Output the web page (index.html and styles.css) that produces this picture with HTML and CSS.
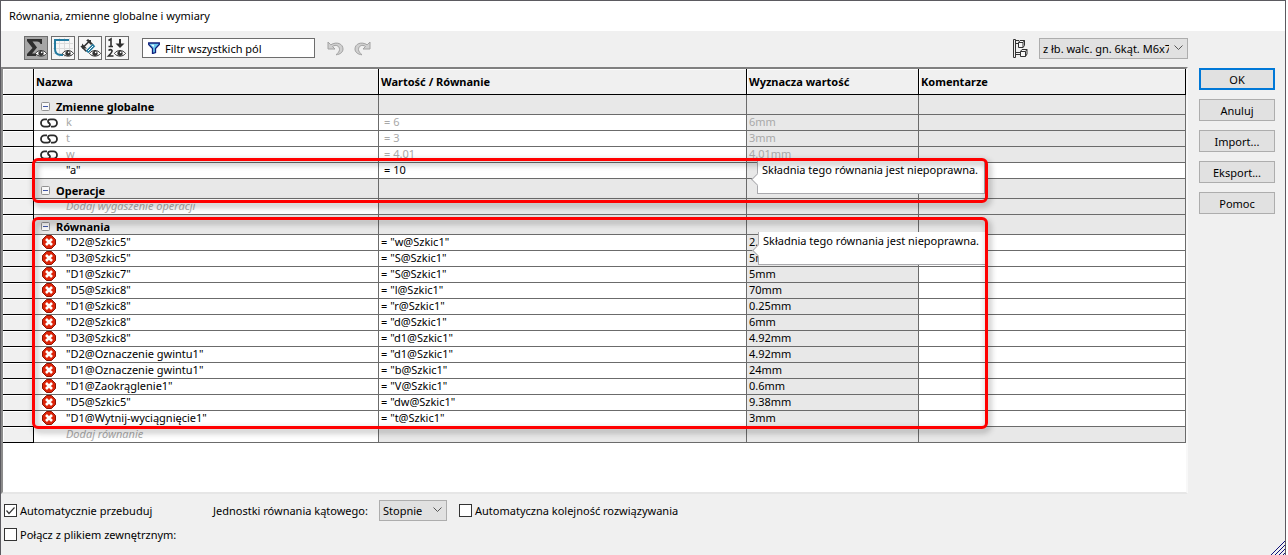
FILE: index.html
```
<!DOCTYPE html>
<html lang="pl">
<head>
    <meta charset="UTF-8">
    <meta name="viewport" content="width=device-width, initial-scale=1.0">
    <title>Równania, zmienne globalne i wymiary</title>
    <link rel="stylesheet" href="styles.css">
</head>
<body>
    <svg class="sprite" aria-hidden="true">
        <symbol id="eye" viewBox="0 0 12 8">
            <path d="M0.5 4.5C3 0.5 9 0.5 11.5 4.5C9 8 3 8 0.5 4.5Z" fill="#fff" stroke="#333" stroke-width="1"/>
            <circle cx="6" cy="4.3" r="2.6" fill="#333"/>
            <circle cx="6.7" cy="3.4" r="0.8" fill="#fff"/>
        </symbol>
        <symbol id="link" viewBox="0 0 18 10">
            <path d="M7 1.400H4.600A3.600 3.600 0 0 0 4.600 8.600H7.500Q10 8.600 10 6.500Q10 5.200 8.500 4.800" fill="none" stroke="#2b2b2b" stroke-width="1.800"/>
            <path d="M11 8.600H13.400A3.600 3.600 0 0 0 13.400 1.400H10.500Q8 1.400 8 3.500Q8 4.800 9.500 5.200" fill="none" stroke="#2b2b2b" stroke-width="1.800"/>
        </symbol>
        <symbol id="error" viewBox="0 0 14 14">
            <path d="M4.500 .5H9.500L13.500 4.500V9.500L9.500 13.500H4.500L.5 9.500V4.500Z" fill="#dc2408" stroke="#8c1608"/>
            <path d="M4 4L10 10M10 4L4 10" stroke="#fff" stroke-width="2.600"/>
        </symbol>
        <symbol id="minus" viewBox="0 0 9 9">
            <rect x=".5" y=".5" width="8" height="8" rx="1" fill="#f8f8f8" stroke="#919191"/>
            <path d="M2 4.500H7" stroke="#4157a5"/>
        </symbol>
    </svg>

    <main class="dialog">
        <h1 class="title">Równania, zmienne globalne i wymiary</h1>

        <div class="content">
            <div class="left">
                <div class="toolbar">
                    <div class="views">
                        <button type="button" class="tool active" aria-label="Widok równań">
                            <svg width="22" height="22" viewBox="0 0 22 22">
                                <path d="M2 2H17V7H15.500Q15 4.500 12 4.500H7.500L12 10.500L7 16.500H11V19H2V17L7.500 11L2 4Z" fill="#2e2e2e"/>
                                <use href="#eye" x="10" y="12" width="12" height="8"/>
                            </svg>
                        </button>
                        <button type="button" class="tool" aria-label="Widok szkicu">
                            <svg width="22" height="22" viewBox="0 0 22 22">
                                <path d="M7.500 1V20M12.500 1V20M17.500 1V20M1 6.500H21M1 11.500H21M1 16.500H21" stroke="#dcdcdc"/>
                                <path d="M17 3H3V12Q3 18 9 18H11" fill="none" stroke="#247a9f" stroke-width="2"/>
                                <use href="#eye" x="10" y="12" width="12" height="8"/>
                            </svg>
                        </button>
                        <button type="button" class="tool" aria-label="Widok wymiarów">
                            <svg width="22" height="22" viewBox="0 0 22 22">
                                <path d="M2 9L7.500 14.500M8.500 2.500L14 8M4.500 10L10.500 4" stroke="#333" stroke-width="1.600"/>
                                <path d="M3 11.500V6.500L8 11.500ZM7 3H12V8Z" fill="#333"/>
                                <path d="M8 15L15 8" stroke="#247a9f" stroke-width="3.500"/>
                                <path d="M9 14L14 9" stroke="#fff"/>
                                <use href="#eye" x="10" y="12" width="12" height="8"/>
                            </svg>
                        </button>
                        <button type="button" class="tool" aria-label="Widok uporządkowany">
                            <svg width="22" height="22" viewBox="0 0 22 22">
                                <path d="M2.500 3.500L5 2V9.500M2.500 9.500H7" fill="none" stroke="#2e2e2e" stroke-width="1.600"/>
                                <path d="M2.500 13.500Q4.500 11.700 6 13.500Q6.500 15 2.500 19H7.500" fill="none" stroke="#2e2e2e" stroke-width="1.600"/>
                                <path d="M14 2V8" stroke="#2e2e2e" stroke-width="2"/>
                                <path d="M9.500 6.500H18.500L14 11Z" fill="#2e2e2e"/>
                                <use href="#eye" x="8" y="12" width="12" height="8"/>
                            </svg>
                        </button>
                    </div>
                    <label class="filter">
                        <svg width="12" height="12" viewBox="0 0 12 12">
                            <path d="M.7 1H11.300V2.500L7.500 6.500V10.500L4.500 11.500V6.500L.7 2.500Z" fill="#6cc8ee" stroke="#10207c" stroke-width="1.300"/>
                            <path d="M3 2.700H6L5.700 5Z" fill="#fff"/>
                        </svg>
                        <input type="text" placeholder="Filtr wszystkich pól" aria-label="Filtr wszystkich pól">
                    </label>
                    <div class="history">
                        <button type="button" class="plain" aria-label="Cofnij">
                            <svg width="17" height="15" viewBox="0 0 17 15">
                                <path d="M1 1V8H8L5.500 5.500C9 3 12.500 5 12.500 8.500C12.500 10.500 11 12 9 13.800C13.500 13.300 16 11 16 8C16 3 10 0 3.800 3.800Z" fill="#d0d0d0" stroke="#a2a2a2"/>
                            </svg>
                        </button>
                        <button type="button" class="plain" aria-label="Ponów">
                            <svg width="17" height="15" viewBox="0 0 17 15">
                                <path d="M16 1V8H9L11.500 5.500C8 3 4.500 5 4.500 8.500C4.500 10.500 6 12 8 13.800C3.500 13.300 1 11 1 8C1 3 7 0 13.200 3.800Z" fill="#d0d0d0" stroke="#a2a2a2"/>
                            </svg>
                        </button>
                    </div>
                    <div class="config">
                        <svg width="15" height="19" viewBox="0 0 15 19">
                            <path d="M.5 .5H2.500V18.500H.5ZM2.500 4.500H5M2.500 13.500H7M2.500 1.500H6M2.500 15.500H7" fill="none" stroke="#333"/>
                            <path d="M5.500 3.500L7 1.500H11.500V6.500L10 8.500H5.500ZM5.500 3.500H10V8.500M10 3.500L11.500 1.500M7.500 12.500L9 10.500H14V15L12.500 17.500H7.500ZM7.500 12.500H12.500V17.500M12.500 12.500L14 10.500" fill="#f8f8f8" stroke="#333"/>
                        </svg>
                        <select class="config-select" aria-label="Konfiguracja">
                            <option>z łb. walc. gn. 6kąt. M6x70</option>
                        </select>
                    </div>
                </div>

                <div class="grid">
                    <table>
                        <colgroup>
                            <col class="col-mark">
                            <col class="col-name">
                            <col class="col-equation">
                            <col class="col-value">
                            <col>
                        </colgroup>
                        <thead>
                            <tr><th></th><th>Nazwa</th><th>Wartość / Równanie</th><th>Wyznacza wartość</th><th>Komentarze</th></tr>
                        </thead>
                        <tbody>
                            <tr class="section"><td></td><td><svg class="toggle"><use href="#minus"/></svg>Zmienne globalne</td><td></td><td></td><td></td></tr>
                            <tr class="linked"><td></td><td><span class="icon"><svg width="18" height="10"><use href="#link"/></svg></span>k</td><td>= 6</td><td>6mm</td><td></td></tr>
                            <tr class="linked"><td></td><td><span class="icon"><svg width="18" height="10"><use href="#link"/></svg></span>t</td><td>= 3</td><td>3mm</td><td></td></tr>
                            <tr class="linked"><td></td><td><span class="icon"><svg width="18" height="10"><use href="#link"/></svg></span>w</td><td>= 4.01</td><td>4.01mm</td><td></td></tr>
                            <tr class="global"><td></td><td><span class="icon"></span>"a"</td><td>= 10</td><td></td><td></td></tr>
                            <tr class="section"><td></td><td><svg class="toggle"><use href="#minus"/></svg>Operacje</td><td></td><td></td><td></td></tr>
                            <tr class="add"><td></td><td><span class="icon"></span>Dodaj wygaszenie operacji</td><td></td><td></td><td></td></tr>
                            <tr class="section"><td></td><td><svg class="toggle"><use href="#minus"/></svg>Równania</td><td></td><td></td><td></td></tr>
                            <tr><td></td><td><span class="icon"><svg width="14" height="14"><use href="#error"/></svg></span>"D2@Szkic5"</td><td>= "w@Szkic1"</td><td>2.</td><td></td></tr>
                            <tr><td></td><td><span class="icon"><svg width="14" height="14"><use href="#error"/></svg></span>"D3@Szkic5"</td><td>= "S@Szkic1"</td><td>5mm</td><td></td></tr>
                            <tr><td></td><td><span class="icon"><svg width="14" height="14"><use href="#error"/></svg></span>"D1@Szkic7"</td><td>= "S@Szkic1"</td><td>5mm</td><td></td></tr>
                            <tr><td></td><td><span class="icon"><svg width="14" height="14"><use href="#error"/></svg></span>"D5@Szkic8"</td><td>= "l@Szkic1"</td><td>70mm</td><td></td></tr>
                            <tr><td></td><td><span class="icon"><svg width="14" height="14"><use href="#error"/></svg></span>"D1@Szkic8"</td><td>= "r@Szkic1"</td><td>0.25mm</td><td></td></tr>
                            <tr><td></td><td><span class="icon"><svg width="14" height="14"><use href="#error"/></svg></span>"D2@Szkic8"</td><td>= "d@Szkic1"</td><td>6mm</td><td></td></tr>
                            <tr><td></td><td><span class="icon"><svg width="14" height="14"><use href="#error"/></svg></span>"D3@Szkic8"</td><td>= "d1@Szkic1"</td><td>4.92mm</td><td></td></tr>
                            <tr><td></td><td><span class="icon"><svg width="14" height="14"><use href="#error"/></svg></span>"D2@Oznaczenie gwintu1"</td><td>= "d1@Szkic1"</td><td>4.92mm</td><td></td></tr>
                            <tr><td></td><td><span class="icon"><svg width="14" height="14"><use href="#error"/></svg></span>"D1@Oznaczenie gwintu1"</td><td>= "b@Szkic1"</td><td>24mm</td><td></td></tr>
                            <tr><td></td><td><span class="icon"><svg width="14" height="14"><use href="#error"/></svg></span>"D1@Zaokrąglenie1"</td><td>= "V@Szkic1"</td><td>0.6mm</td><td></td></tr>
                            <tr><td></td><td><span class="icon"><svg width="14" height="14"><use href="#error"/></svg></span>"D5@Szkic5"</td><td>= "dw@Szkic1"</td><td>9.38mm</td><td></td></tr>
                            <tr><td></td><td><span class="icon"><svg width="14" height="14"><use href="#error"/></svg></span>"D1@Wytnij-wyciągnięcie1"</td><td>= "t@Szkic1"</td><td>3mm</td><td></td></tr>
                            <tr class="add"><td></td><td><span class="icon"></span>Dodaj równanie</td><td></td><td></td><td></td></tr>
                        </tbody>
                    </table>

                    <div class="callout callout-global" role="tooltip">Składnia tego równania jest niepoprawna.</div>
                    <div class="callout callout-equation" role="tooltip">Składnia tego równania jest niepoprawna.</div>
                    <div class="marker marker-global"></div>
                    <div class="marker marker-equations"></div>
                </div>
            </div>

            <div class="actions">
                <button type="button" class="btn primary">OK</button>
                <button type="button" class="btn">Anuluj</button>
                <button type="button" class="btn">Import...</button>
                <button type="button" class="btn">Eksport...</button>
                <button type="button" class="btn">Pomoc</button>
            </div>
        </div>

        <div class="options">
            <div class="options-row">
                <label class="check check-rebuild"><input type="checkbox" checked>Automatycznie przebuduj</label>
                <label class="units" for="units">Jednostki równania kątowego:</label>
                <select id="units" class="units-select">
                    <option>Stopnie</option>
                </select>
                <label class="check"><input type="checkbox">Automatyczna kolejność rozwiązywania</label>
            </div>
            <div class="options-row">
                <label class="check"><input type="checkbox">Połącz z plikiem zewnętrznym:</label>
            </div>
            <svg class="grip" width="14" height="14" viewBox="0 0 14 14">
                <path d="M0 14L14 0M4 14L14 4M8 14L14 8M12 14L14 12" stroke="#10107a"/>
            </svg>
        </div>
    </main>
</body>
</html>
```
FILE: styles.css
```
* {
    box-sizing: border-box;
}
body {
    margin: 0;
    background-color: #fff;
    color: #000;
    font-family: "Noto Sans", "Open Sans", sans-serif;
    font-size: 11px;
    line-height: 15px;
}
button, input, select {
    font: inherit;
    color: inherit;
}
svg {
    display: block;
    flex: none;
}
.sprite {
    position: absolute;
    width: 0;
    height: 0;
}
.dialog {
    display: flex;
    flex-direction: column;
    min-height: 100vh;
    margin-right: 2px;
    border: 1px solid #5b5a60;
    border-bottom: none;
    background-color: #f0f0f0;
}
.title {
    margin: 0;
    padding: 0 8px;
    background-color: #fff;
    font-size: 11px;
    font-weight: normal;
    line-height: 30px;
}
.content {
    display: flex;
    flex: 1;
}
.left {
    display: flex;
    flex-direction: column;
    flex: 1;
    min-width: 0;
}

/* toolbar */
.toolbar {
    display: flex;
    align-items: center;
    height: 36px;
    padding: 0 0 2px 23px;
}
.views {
    display: flex;
    gap: 3px;
}
.tool {
    width: 24px;
    height: 24px;
    padding: 0;
    border: 1px solid #6d6d6d;
    background-color: #f7f7f7;
}
.tool.active {
    background-color: #a6a6a6;
}
.filter {
    display: flex;
    align-items: center;
    gap: 5px;
    width: 173px;
    height: 20px;
    margin-left: 13px;
    padding-left: 5px;
    border: 1px solid #6d6d6d;
    background-color: #fff;
}
.filter input {
    width: 100%;
    min-width: 0;
    padding: 0;
    border: none;
    outline: none;
    background: none;
}
.filter input::placeholder {
    color: #000;
    opacity: 1;
}
.history {
    display: flex;
    gap: 10px;
    margin-left: 12px;
}
.plain {
    padding: 0;
    border: none;
    background: none;
}
.config {
    display: flex;
    align-items: center;
    gap: 11px;
    margin-left: auto;
}
select {
    appearance: none;
    height: 21px;
    padding: 0 18px 0 3px;
    border: 1px solid #adadad;
    border-radius: 0;
    background: #e1e1e1 url("data:image/svg+xml,%3Csvg xmlns='http://www.w3.org/2000/svg' width='9' height='6'%3E%3Cpath d='M.5 .5L4.500 4.500L8.500 .5' fill='none' stroke='%23555'/%3E%3C/svg%3E") no-repeat right 4px center;
}
.config-select {
    width: 149px;
}

/* equations table */
.grid {
    position: relative;
    flex: 1;
    border: 2px solid #808080;
    border-left-color: #8c8c8c;
    border-right-color: #f8f8f8;
    border-bottom-color: #e6e6e6;
    background-color: #fff;
}
table {
    width: 100%;
    table-layout: fixed;
    border-collapse: separate;
    border-spacing: 0;
}
.col-mark {
    width: 31px;
}
.col-name {
    width: 345px;
}
.col-equation {
    width: 368px;
}
.col-value {
    width: 172px;
}
th {
    height: 26px;
    padding: 0 2px;
    border-right: 1px solid #000;
    border-bottom: 1px solid #000;
    background-color: #f0f0f0;
    box-shadow: inset 1px 1px #fff;
    text-align: left;
}
td {
    height: 16px;
    padding: 0 2px 2px;
    border-right: 1px solid #6b6b6b;
    border-bottom: 1px solid #6b6b6b;
    line-height: 13px;
    white-space: nowrap;
}
td:first-child {
    border-color: #000;
    background-color: #f0f0f0;
    box-shadow: inset 1px 1px #fff;
}
td:nth-child(4) {
    background-color: #e8e8e8;
}
.icon {
    display: inline-flex;
    justify-content: center;
    align-items: center;
    width: 18px;
    height: 13px;
    margin: 0 8px 0 4px;
    vertical-align: top;
}
.section td {
    height: 20px;
    padding: 4px 2px 0;
    font-weight: bold;
    line-height: 15px;
}
.section td:not(:first-child),
.add td:nth-child(n+3),
.linked td:nth-child(5) {
    background-color: #e8e8e8;
}
.toggle {
    display: inline-block;
    width: 9px;
    height: 9px;
    margin: 3px 6px 0 5px;
    vertical-align: top;
}
.linked td {
    color: #a8a8a8;
}
.linked .icon {
    height: 15px;
    margin-bottom: -2px;
}
.linked td:nth-child(3),
.global td:nth-child(3) {
    padding-left: 5px;
}
.add td {
    color: #a8a8a8;
    font-style: italic;
}

/* error callouts and highlight frames over the table */
.callout {
    position: absolute;
    width: 228px;
    height: 33px;
    padding: 1px 4px;
    border: 1px solid #a9a9ad;
    border-top: none;
    background-color: #fff;
    white-space: nowrap;
}
.callout::before {
    content: "";
    position: absolute;
    left: -5px;
    top: 14px;
    width: 8px;
    height: 8px;
    border: 1px solid #a9a9ad;
    border-top: none;
    border-right: none;
    background-color: #fff;
    transform: rotate(45deg);
}
.callout-global {
    left: 754px;
    top: 92px;
}
.callout-equation {
    left: 755px;
    top: 163px;
}
.marker {
    position: absolute;
    left: 29px;
    width: 956px;
    border: 3px solid #f00;
    border-radius: 6px;
    filter: drop-shadow(2px 3px 3px rgba(0, 0, 0, 0.4));
    pointer-events: none;
}
.marker-global {
    top: 89px;
    height: 45px;
}
.marker-equations {
    top: 148px;
    height: 212px;
}

/* dialog buttons */
.actions {
    display: flex;
    flex-direction: column;
    gap: 9px;
    width: 97px;
    padding: 37px 10px 0 11px;
}
.btn {
    height: 22px;
    padding: 0;
    border: 1px solid #adadad;
    background-color: #e1e1e1;
}
.btn.primary {
    border: 2px solid #0078d7;
}

/* bottom options */
.options {
    position: relative;
    height: 61px;
    padding: 4px 3px 0;
}
.options-row {
    display: flex;
    align-items: center;
    height: 24px;
}
.check {
    display: flex;
    align-items: center;
    gap: 3px;
}
.check-rebuild {
    width: 209px;
}
.check input {
    appearance: none;
    width: 13px;
    height: 13px;
    margin: 0;
    border: 1px solid #333;
    background-color: #fff;
}
.check input:checked {
    background-image: url("data:image/svg+xml,%3Csvg xmlns='http://www.w3.org/2000/svg' width='11' height='11'%3E%3Cpath d='M1.500 5.500L4 8.500L9.500 2.500' fill='none' stroke='%23333' stroke-width='1.200'/%3E%3C/svg%3E");
}
.units {
    width: 166px;
}
.units-select {
    width: 68px;
    margin-right: 12px;
}
.grip {
    position: absolute;
    right: 0;
    bottom: 0;
}
```
